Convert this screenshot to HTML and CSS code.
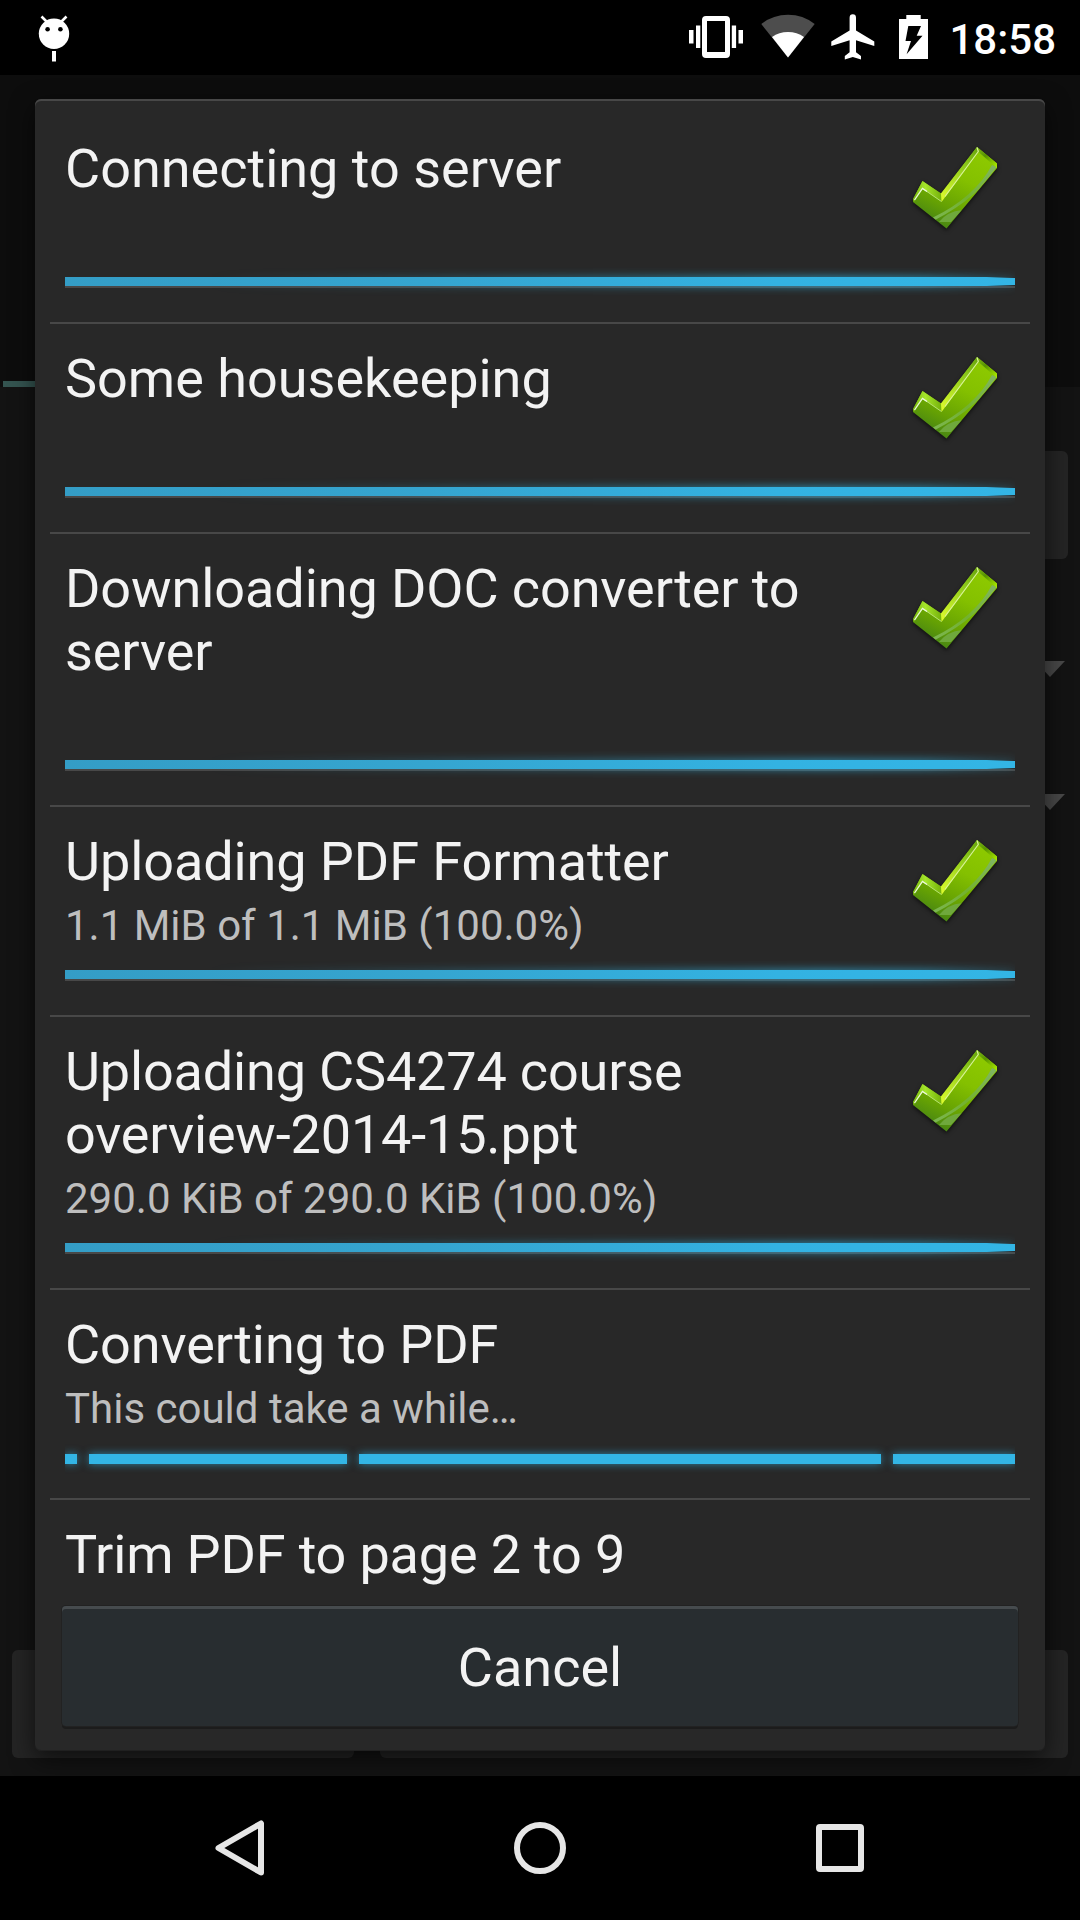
FILE: index.html
```html
<!DOCTYPE html>
<html lang="en">
<head>
<meta charset="utf-8">
<title>Printing progress</title>
<link rel="stylesheet" href="styles.css">
</head>
<body>
<svg class="defs" aria-hidden="true">
  <defs>
    <linearGradient id="face" gradientUnits="userSpaceOnUse" x1="66" y1="10" x2="32" y2="80">
      <stop offset="0" stop-color="#8cc800"/><stop offset=".35" stop-color="#84c000"/><stop offset=".75" stop-color="#66a203"/><stop offset="1" stop-color="#4a8812"/>
    </linearGradient>
    <linearGradient id="long-edge" gradientUnits="userSpaceOnUse" x1="64" y1="0" x2="28" y2="52">
      <stop offset="0" stop-color="#67a40c"/><stop offset=".35" stop-color="#8cc91a"/><stop offset="1" stop-color="#dcfb2e"/>
    </linearGradient>
    <linearGradient id="short-edge" gradientUnits="userSpaceOnUse" x1="2" y1="50" x2="28" y2="50">
      <stop offset="0" stop-color="#7ebc12"/><stop offset=".4" stop-color="#a6e62c"/><stop offset="1" stop-color="#76b30b"/>
    </linearGradient>
    <linearGradient id="cap-edge" gradientUnits="userSpaceOnUse" x1="64" y1="2" x2="85" y2="19">
      <stop offset="0" stop-color="#79b514"/><stop offset=".4" stop-color="#579300"/><stop offset="1" stop-color="#abed00"/>
    </linearGradient>
    <linearGradient id="swoosh" gradientUnits="userSpaceOnUse" x1="80" y1="20" x2="20" y2="72">
      <stop offset="0" stop-color="#7fb560"/><stop offset=".5" stop-color="#73b22f"/><stop offset="1" stop-color="#7cb552"/>
    </linearGradient>
    <clipPath id="face-clip"><path d="M1 55 9.500 41.500 28.300 55 65 4.500 83.500 20.500 33.500 81.500Z"/></clipPath>
    <symbol id="tick" viewBox="0 0 85 82" overflow="visible">
      <path d="M0 52 9.500 34 28 46.500 64 0 84 16.500V21L33.500 81.500 0 55Z" fill="url(#face)"/>
      <path d="M0 52 9.500 34 28 46.500 28.500 55 9.500 41.500 1 55Z" fill="url(#short-edge)"/>
      <path d="M28 46.500 64 0 65.500 5 28.500 55Z" fill="url(#long-edge)"/>
      <path d="M64 0 84 16.500V21L65.500 5Z" fill="url(#cap-edge)"/>
      <g clip-path="url(#face-clip)">
        <path d="M79 18Q62 50 20 70.500L22 73Q66 50 83.500 20Z" fill="url(#swoosh)"/>
        <path d="M26 75Q34 64.500 49 63L38 75Z" fill="#6fa83c"/>
      </g>
      <path d="M9.500 41.500 28.500 54.500" fill="none" stroke="#b4e070" stroke-width="1"/>
      <path d="M1.500 53 9.500 41.500 14 44.500" fill="none" stroke="#ecf8dc" stroke-width="1.300"/>
      <path d="M32 49.500 65.300 4.500 64 .5" fill="none" stroke="#d9f29a" stroke-width="1.200"/>
    </symbol>
  </defs>
</svg>

<div class="screen">
  <header class="status">
    <svg class="debug" width="32" height="48" viewBox="0 0 32 48">
      <path d="M3.500 2.500 9 8M28.500 2.500 23 8" stroke="#fff" stroke-width="2.600"/>
      <circle cx="16" cy="19.800" r="15.200" fill="#fff"/>
      <circle cx="9.600" cy="15.300" r="2.300"/><circle cx="22.400" cy="15.300" r="2.300"/>
      <path d="M14 37h4v10.500h-4z" fill="#fff"/>
    </svg>
    <div class="status-right">
      <svg class="vibrate" width="54" height="42" viewBox="0 0 54 42" fill="#fff">
        <path fill-rule="evenodd" d="M17 0h20q4 0 4 4v34q0 4-4 4H17q-4 0-4-4V4q0-4 4-4zm1 5v31h18V5z"/>
        <path d="M0 14h4.500v13.500H0zM7 9.500h4.300v22.500H7zM42.800 9.500h4.300v22.500h-4.300zM49.500 14h4.500v13.500h-4.500z"/>
      </svg>
      <svg class="wifi" width="54" height="44" viewBox="0 0 54 44">
        <path d="M.3 10Q12 .8 27 .8T53.700 10L27 43.500Z" fill="#4d4d4d"/>
        <path d="M11 23Q18 18 27 18T43 23L27 43.500Z" fill="#fff"/>
      </svg>
      <svg class="plane" width="44" height="46" viewBox="0 0 44 46">
        <path d="M21.800.3q3.200 0 3.200 3.400V16.500L43.300 27.500V32L25 26.300V38.300L30 42V45.500L21.800 43 13.800 45.500V42L18.600 38.300V26.300L.3 32V27.500L18.600 16.500V3.700Q18.600.3 21.800.3z" fill="#fff"/>
      </svg>
      <svg class="battery" width="29" height="44" viewBox="0 0 29 44">
        <path d="M7.300 0h14.400v4H29v40H0V4h7.300z" fill="#fff"/>
        <path d="M9.300 11H22L17.700 20.700H23.500L7.600 39.200 12 26H6.500z"/>
      </svg>
      <span class="clock">18:58</span>
    </div>
  </header>

  <main class="stage">
    <div class="page">
      <div class="tabs"><span class="tab-mark"></span></div>
      <div class="form">
        <div class="field"></div>
        <div class="spinner"></div>
        <div class="spinner"></div>
        <div class="actions"><span></span><span></span></div>
      </div>
    </div>

    <section class="dialog">
      <ul class="tasks">
        <li class="task">
          <div class="head"><div><h2>Connecting to server</h2><p></p></div><svg class="tick"><use href="#tick"/></svg></div>
          <div class="bar"><i></i></div>
        </li>
        <li class="task">
          <div class="head"><div><h2>Some housekeeping</h2><p></p></div><svg class="tick"><use href="#tick"/></svg></div>
          <div class="bar"><i></i></div>
        </li>
        <li class="task">
          <div class="head"><div><h2 class="snug">Downloading DOC converter to server</h2><p></p></div><svg class="tick"><use href="#tick"/></svg></div>
          <div class="bar"><i></i></div>
        </li>
        <li class="task">
          <div class="head"><div><h2 class="snug">Uploading PDF Formatter</h2><p>1.1 MiB of 1.1 MiB (100.0%)</p></div><svg class="tick"><use href="#tick"/></svg></div>
          <div class="bar"><i></i></div>
        </li>
        <li class="task">
          <div class="head"><div><h2 class="tight">Uploading CS4274 course overview-2014-15.ppt</h2><p>290.0 KiB of 290.0 KiB (100.0%)</p></div><svg class="tick"><use href="#tick"/></svg></div>
          <div class="bar"><i></i></div>
        </li>
        <li class="task">
          <div class="head"><div><h2 class="snug">Converting to PDF</h2><p>This could take a while…</p></div></div>
          <div class="bar busy"><b></b><b></b><b></b><b></b></div>
        </li>
        <li class="task">
          <div class="head"><div><h2 class="tight">Trim PDF to page 2 to 9</h2></div></div>
        </li>
      </ul>
      <button class="cancel" type="button">Cancel</button>
    </section>
  </main>

  <nav class="nav">
    <svg width="60" height="60" viewBox="0 0 60 60"><path d="M51 5.500V54.500L8.500 30Z"/></svg>
    <svg width="60" height="60" viewBox="0 0 60 60"><circle cx="30" cy="30" r="23"/></svg>
    <svg width="60" height="60" viewBox="0 0 60 60"><rect x="9" y="9" width="42" height="42" rx="1"/></svg>
  </nav>
</div>
</body>
</html>
```

FILE: styles.css
```css
* { box-sizing: border-box; }
body { margin: 0; background: #000; font-family: Roboto, sans-serif; }
h2, p, ul { margin: 0; padding: 0; font-weight: 400; list-style: none; }
svg { display: block; flex: none; }
.defs { position: absolute; width: 0; height: 0; }

.screen {
  display: grid;
  grid-template-rows: 75px 1701px 144px;
  width: 1080px;
  height: 1920px;
  overflow: hidden;
  background: #000;
}

/* status bar */
.status { display: flex; justify-content: space-between; padding: 14px 24px 0 38px; }
.status-right { display: flex; align-items: flex-start; }
.vibrate { margin: 2px 18px 0 0; }
.wifi { margin-right: 16px; }
.plane { margin-right: 24px; }
.battery { margin: 1px 21px 0 0; }
.clock { color: #fff; font-size: 42px; font-weight: 500; line-height: 52px; }

/* dimmed page behind the dialog */
.stage { position: relative; }
.page { display: flex; flex-direction: column; height: 100%; }
.tabs { display: flex; align-items: flex-end; height: 312px; padding-left: 3px; background: #0d0d0d; }
.tab-mark { width: 340px; height: 6px; background: #345450; }
.form { display: flex; flex: 1; flex-direction: column; padding: 64px 12px 18px; background: #131313; }
.field { height: 108px; margin-left: 24px; border-radius: 6px; background: #242424; }
.spinner {
  width: 30px; height: 16px;
  margin: 102px 3px 0 auto;
  background: #484848;
  clip-path: polygon(0 0, 100% 0, 50% 100%);
}
.spinner + .spinner { margin-top: 117px; }
.actions { display: grid; grid-template-columns: 342px 1fr; gap: 26px; height: 108px; margin-top: auto; }
.actions span { border-radius: 6px; background: #242424; }

/* dialog */
.dialog {
  position: absolute;
  inset: 24px 35px 25px;
  display: flex;
  flex-direction: column;
  padding: 15px 15px 25px;
  border-radius: 6px;
  background: #282828;
  box-shadow: inset 0 2px #484848, inset 0 -1px #202020, 0 8px 24px rgba(0, 0, 0, .6);
}
.tasks { flex: 1; overflow: hidden; }
.task { padding: 22px 15px 34px; border-bottom: 2px solid #484848; }
.task:last-child { border: 0; }
.head { display: flex; justify-content: space-between; }
.head > div { width: 800px; padding-top: 1px; }
h2 { color: #f3f3f3; font-size: 54px; line-height: 63px; }
.snug { letter-spacing: -.09px; }
.tight { letter-spacing: -.17px; }
p { height: 57px; padding-top: 8px; color: #bebebe; font-size: 42px; line-height: 49px; }
.tick {
  width: 85px; height: 82px;
  margin: 11px 17px 0 0;
  overflow: visible;
  filter: drop-shadow(0 2px 2px rgba(0, 0, 0, .6));
}
.bar { position: relative; height: 11px; margin-top: 20px; background: linear-gradient(#0000 9px, #484848 9px); }
.bar::before {
  content: "";
  position: absolute;
  inset: 0 0 2px;
  box-shadow: 0 0 10px #33b5e5;
  clip-path: inset(-10px 0);
  -webkit-mask: linear-gradient(90deg, transparent 15%, rgba(0, 0, 0, .8) 80%, rgba(0, 0, 0, .7) 90%, rgba(0, 0, 0, .2)) 0 0 / 100% 100%;
  mask-clip: no-clip;
}
.bar i {
  position: relative;
  display: block;
  height: 9px;
  background: linear-gradient(90deg, #349dc6, #35a5d0 38%, #33b2e2 75%, #33b5e5);
  clip-path: polygon(0 0, 97% 0, 100% 1px, 100% 8px, 97% 100%, 0 100%);
}
.busy { display: grid; grid-template-columns: 12px 258px 522px 122px; gap: 12px; margin-top: 21px; height: 10px; background: none; clip-path: inset(-10px 0); }
.busy::before { display: none; }
.busy b { background: #33b5e5; box-shadow: 0 0 8px rgba(51, 181, 229, .65); }
.cancel {
  flex: none;
  height: 120px;
  margin: 0 12px;
  padding: 4px 0 0;
  border: 0;
  border-radius: 4px;
  background: #282d30;
  box-shadow: inset 0 3px #464b4e, 0 0 0 1px #222, 0 3px #1c1c1c;
  color: #f3f3f3;
  font: 400 54px/116px Roboto, sans-serif;
}

/* navigation bar */
.nav { display: flex; justify-content: center; gap: 240px; padding-top: 42px; }
.nav svg { fill: none; stroke: #e6e6e6; stroke-width: 6; stroke-linejoin: round; }
```
